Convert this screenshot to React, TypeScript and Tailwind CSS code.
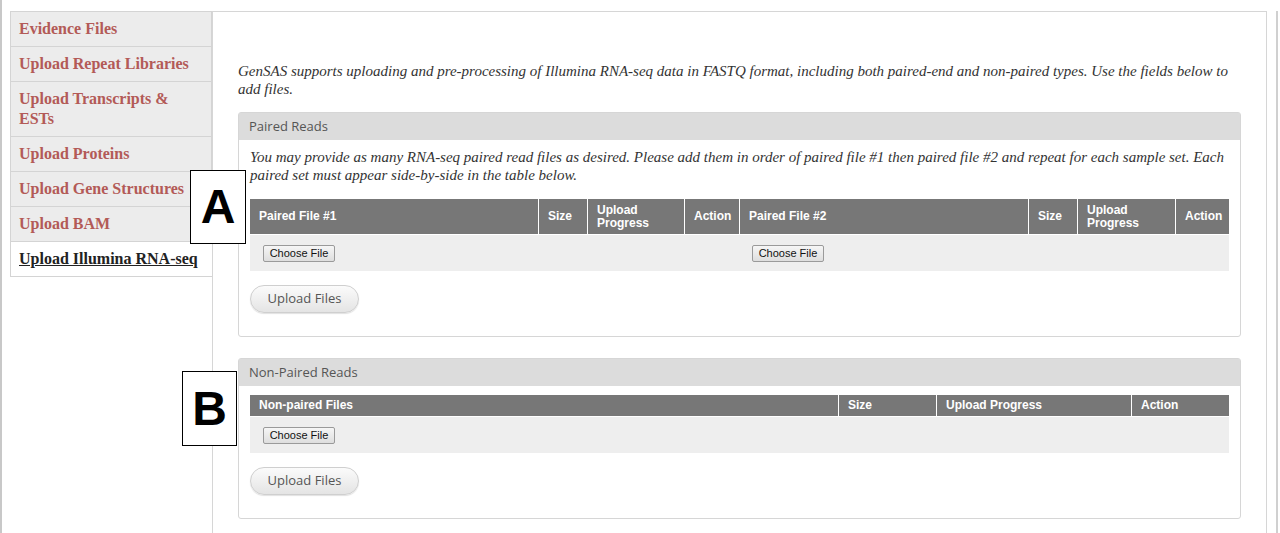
import React from 'react';

const serif = { fontFamily: '"Liberation Serif", Georgia, serif' };
const sans = { fontFamily: '"Open Sans", "Liberation Sans", sans-serif' };
const arial = { fontFamily: '"Liberation Sans", Arial, sans-serif' };

const tabs = [
  'Evidence Files',
  'Upload Repeat Libraries',
  'Upload Transcripts & ESTs',
  'Upload Proteins',
  'Upload Gene Structures',
  'Upload BAM',
];

function ChooseFile() {
  return (
    <button
      className="block h-[17px] w-[72px] rounded-[2px] border border-[#9a9a9a] bg-gradient-to-b from-[#f6f6f6] to-[#dedede] text-[11px] leading-none text-[#111]"
      style={arial}
    >
      Choose File
    </button>
  );
}

function UploadButton() {
  return (
    <button
      className="block h-[28px] w-[109px] rounded-full border border-[#cfcfcf] bg-gradient-to-b from-[#fbfbfb] to-[#e4e4e4] text-[13px] text-[#555] shadow-[0_1px_1px_rgba(0,0,0,0.12)]"
      style={sans}
    >
      Upload Files
    </button>
  );
}

function Panel({ title, children }: { title: string; children: React.ReactNode }) {
  return (
    <div className="rounded-[3px] border border-[#d6d6d6] bg-white">
      <div className="flex h-[27px] items-center bg-[#dcdcdc] px-[10px] text-[13px] text-[#555]" style={sans}>
        {title}
      </div>
      <div className="px-[11px] pb-[23px]">{children}</div>
    </div>
  );
}

type Col = { label: React.ReactNode; w: string; file?: boolean };

function FileTable({ cols, headH }: { cols: Col[]; headH: string }) {
  return (
    <div className="w-full min-w-0" style={arial}>
      <div className={'flex bg-[#777777] text-[12px] font-bold leading-[13px] text-white ' + headH}>
        {cols.map((c, i) => (
          <div
            key={i}
            className={'flex min-w-0 items-center whitespace-nowrap pl-[9px] ' + c.w + (i > 0 ? ' border-l border-white' : '')}
          >
            {c.label}
          </div>
        ))}
      </div>
      <div className="flex h-[37px] border-t border-white bg-[#eeeeee]">
        {cols.map((c, i) => (
          <div key={i} className={'flex min-w-0 items-center pl-[13px] pt-[1px] ' + c.w}>
            {c.file && <ChooseFile />}
          </div>
        ))}
      </div>
    </div>
  );
}

export default function App() {
  const pairedCols: Col[] = [
    { label: 'Paired File #1', w: 'w-[288px] shrink-0', file: true },
    { label: 'Size', w: 'w-[49px] shrink-0' },
    { label: <span>Upload<br />Progress</span>, w: 'w-[97px] shrink-0' },
    { label: 'Action', w: 'w-[55px] shrink-0' },
    { label: 'Paired File #2', w: 'w-[289px] shrink-0', file: true },
    { label: 'Size', w: 'w-[49px] shrink-0' },
    { label: <span>Upload<br />Progress</span>, w: 'w-[98px] shrink-0' },
    { label: 'Action', w: 'flex-1' },
  ];
  const singleCols: Col[] = [
    { label: 'Non-paired Files', w: 'w-[588px] shrink-0', file: true },
    { label: 'Size', w: 'w-[98px] shrink-0' },
    { label: 'Upload Progress', w: 'w-[195px] shrink-0' },
    { label: 'Action', w: 'flex-1' },
  ];

  return (
    <div className="relative h-[533px] w-[1280px] overflow-hidden bg-white">
      <div className="flex h-full border-l-2 border-[#c8c8c8] pt-[11px] pl-[8px]">
        {/* sidebar */}
        <div className="w-[202px] shrink-0" style={serif}>
          {tabs.map((t) => (
            <div
              key={t}
              className="-mb-px border border-[#d4d4d4] bg-[#ececec] px-[8px] py-[7px] text-[16px] font-bold leading-[20px] text-[#b35a57]"
            >
              {t}
            </div>
          ))}
          <div className="border border-r-0 border-[#d4d4d4] bg-white px-[8px] py-[7px] text-[16px] font-bold leading-[20px] text-[#222] underline">
            Upload Illumina RNA-seq
          </div>
        </div>

        {/* content */}
        <div className="min-w-0 flex-1 border-t border-l border-r border-[#d6d6d6] pt-[50px] pl-[25px] pr-[25px]">
          <p className="text-[15px] italic leading-[18px] text-[#333]" style={serif}>
            GenSAS supports uploading and pre-processing of Illumina RNA-seq data in FASTQ format, including both paired-end and non-paired types. Use the fields below to add files.
          </p>

          <div className="mt-[14px]">
            <Panel title="Paired Reads">
              <p className="pt-[8px] text-[15px] italic leading-[18px] text-[#333]" style={serif}>
                You may provide as many RNA-seq paired read files as desired. Please add them in order of paired file #1 then paired file #2 and repeat for each sample set. Each paired set must appear side-by-side in the table below.
              </p>
              <div className="mt-[15px]">
                <FileTable cols={pairedCols} headH="h-[35px]" />
              </div>
              <div className="mt-[14px]"><UploadButton /></div>
            </Panel>
          </div>

          <div className="mt-[21px]">
            <Panel title="Non-Paired Reads">
              <div className="mt-[9px]">
                <FileTable cols={singleCols} headH="h-[21px]" />
              </div>
              <div className="mt-[14px]"><UploadButton /></div>
            </Panel>
          </div>
        </div>
        <div className="w-[9px] shrink-0" />
        <div className="w-[2px] shrink-0 bg-[#d0d0d0]" />
        <div className="w-[2px] shrink-0" />
      </div>

      {/* annotation labels */}
      <div
        className="absolute left-[190px] top-[170px] flex h-[74px] w-[56px] items-center justify-center border border-black bg-white text-[48px] font-bold text-black"
        style={arial}
      >
        A
      </div>
      <div
        className="absolute left-[182px] top-[371px] flex h-[75px] w-[55px] items-center justify-center border border-black bg-white text-[48px] font-bold text-black"
        style={arial}
      >
        B
      </div>
    </div>
  );
}
